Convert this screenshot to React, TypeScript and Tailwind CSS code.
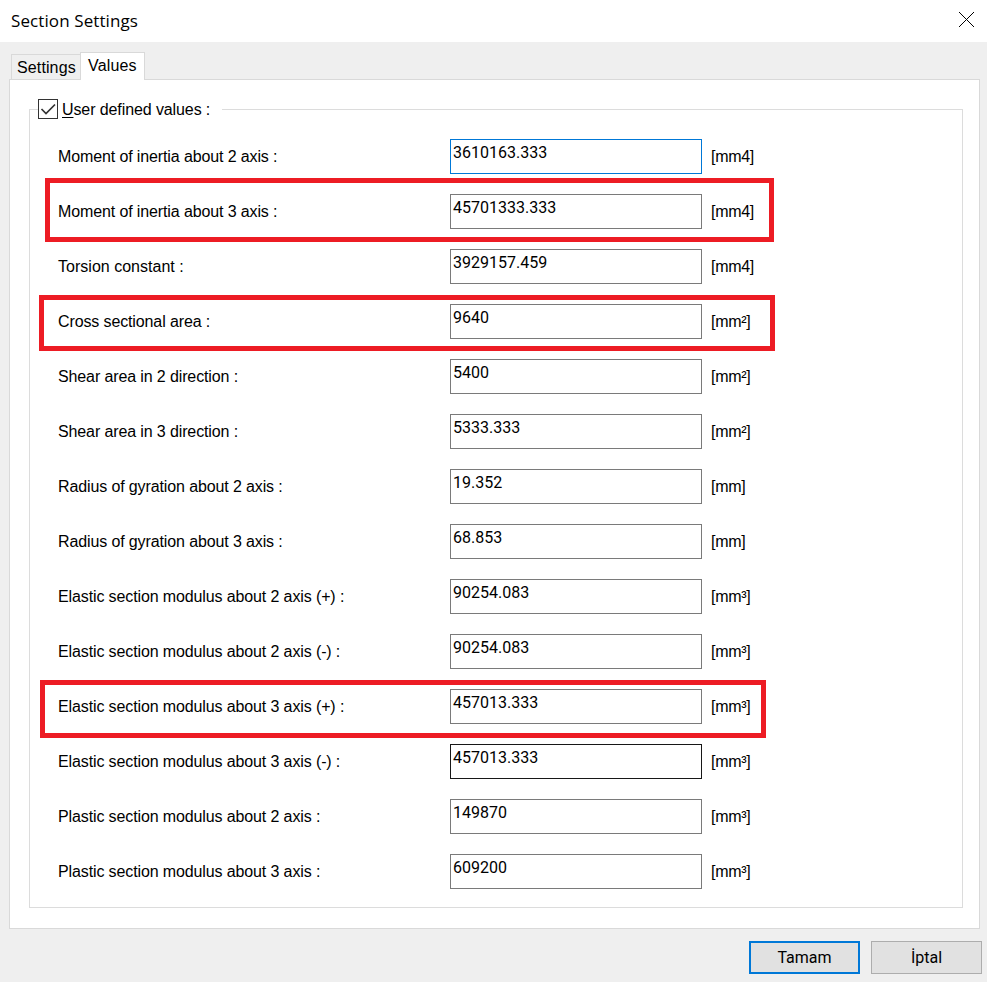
type Row = {
  label: string;
  value: string;
  unit: string;
  border?: string;
  tracking?: string;
};

const rows: Row[] = [
  { label: "Moment of inertia about 2 axis :", value: "3610163.333", unit: "[mm4]", border: "border-[#0078d7]" },
  { label: "Moment of inertia about 3 axis :", value: "45701333.333", unit: "[mm4]" },
  { label: "Torsion constant :", value: "3929157.459", unit: "[mm4]", tracking: "tracking-[0.02px]" },
  { label: "Cross sectional area :", value: "9640", unit: "[mm²]" },
  { label: "Shear area in 2 direction :", value: "5400", unit: "[mm²]" },
  { label: "Shear area in 3 direction :", value: "5333.333", unit: "[mm²]" },
  { label: "Radius of gyration about 2 axis :", value: "19.352", unit: "[mm]" },
  { label: "Radius of gyration about 3 axis :", value: "68.853", unit: "[mm]" },
  { label: "Elastic section modulus about 2 axis (+) :", value: "90254.083", unit: "[mm³]" },
  { label: "Elastic section modulus about 2 axis (-) :", value: "90254.083", unit: "[mm³]" },
  { label: "Elastic section modulus about 3 axis (+) :", value: "457013.333", unit: "[mm³]" },
  { label: "Elastic section modulus about 3 axis (-) :", value: "457013.333", unit: "[mm³]", border: "border-[#171717]" },
  { label: "Plastic section modulus about 2 axis :", value: "149870", unit: "[mm³]" },
  { label: "Plastic section modulus about 3 axis :", value: "609200", unit: "[mm³]" },
];

function ValueRow({ label, value, unit, border = "border-[#7a7a7a]", tracking = "tracking-[-0.12px]" }: Row) {
  return (
    <div className="flex h-[55px] items-center">
      <span className={`w-[420px] pl-7 ${tracking}`}>{label}</span>
      <div
        className={`h-[35px] w-[252px] border bg-white pl-[2px] pt-[3px] font-[Roboto,sans-serif] leading-5 ${border}`}
      >
        {value}
      </div>
      <span className="ml-[9px] tracking-[-0.3px]">{unit}</span>
    </div>
  );
}

export default function App() {
  return (
    <div className="relative flex h-[982px] w-[987px] flex-col overflow-hidden whitespace-nowrap bg-[#efefef] font-['Liberation_Sans',Arial,sans-serif] text-[16px] leading-5 text-black">
      <header className="flex h-[42px] shrink-0 items-center justify-between bg-white pl-[11px] pr-3">
        <h1 className="font-['Open_Sans','Noto_Sans',sans-serif] text-[17px] tracking-[0.1px]">Section Settings</h1>
        <svg width="17" height="17" viewBox="0 0 17 17" className="-mt-[3px]" stroke="#000" strokeWidth="1">
          <path d="M1 1 L16 16 M16 1 L1 16" />
        </svg>
      </header>

      <div className="flex h-[37px] shrink-0 items-end pl-[11px]">
        <div className="flex h-[25px] w-[69px] items-center border-l border-t border-[#d9d9d9] pl-[5px] pt-[2px] tracking-[0.12px]">
          Settings
        </div>
        <div className="z-10 -mb-px flex h-[28px] w-[65px] items-center border border-b-0 border-[#d9d9d9] bg-white pb-[2px] pl-[7px] tracking-[0.15px]">
          Values
        </div>
      </div>

      <main className="ml-[9px] h-[850px] w-[971px] shrink-0 border border-[#d9d9d9] bg-white pl-[19px] pt-[29px]">
        <section className="h-[799px] w-[934px] border border-[#dcdcdc]">
          <div className="-mt-[11px] ml-2 flex h-5 w-[184px] items-center bg-white">
            <div className="flex size-5 items-center justify-center border border-[#333] bg-white">
              <svg width="16" height="14" viewBox="0 0 16 14" fill="none" stroke="#333" strokeWidth="1.7">
                <path d="M1.5 7 L6 11.5 L15 2.5" />
              </svg>
            </div>
            <span className="ml-1 pt-[2px] tracking-[-0.1px]">
              <span className="underline underline-offset-2">U</span>ser defined values :
            </span>
          </div>
          <div className="mt-[10px]">
            {rows.map((row) => (
              <ValueRow key={row.label} {...row} />
            ))}
          </div>
        </section>
      </main>

      <footer className="mt-3 flex justify-end gap-[11px] pr-[5px] font-[Roboto,sans-serif]">
        <button className="h-[33px] w-[111px] border-2 border-[#0078d7] bg-[#e1e1e1]">Tamam</button>
        <button className="h-[33px] w-[111px] border border-[#adadad] bg-[#e1e1e1]">İptal</button>
      </footer>

      <div className="absolute left-[45px] top-[178px] h-[64px] w-[729px] border-[5px] border-[#ed1c24]" />
      <div className="absolute left-[39px] top-[295px] h-[56px] w-[736px] border-[5px] border-[#ed1c24]" />
      <div className="absolute left-[40px] top-[680px] h-[58px] w-[726px] border-[5px] border-[#ed1c24]" />
    </div>
  );
}
